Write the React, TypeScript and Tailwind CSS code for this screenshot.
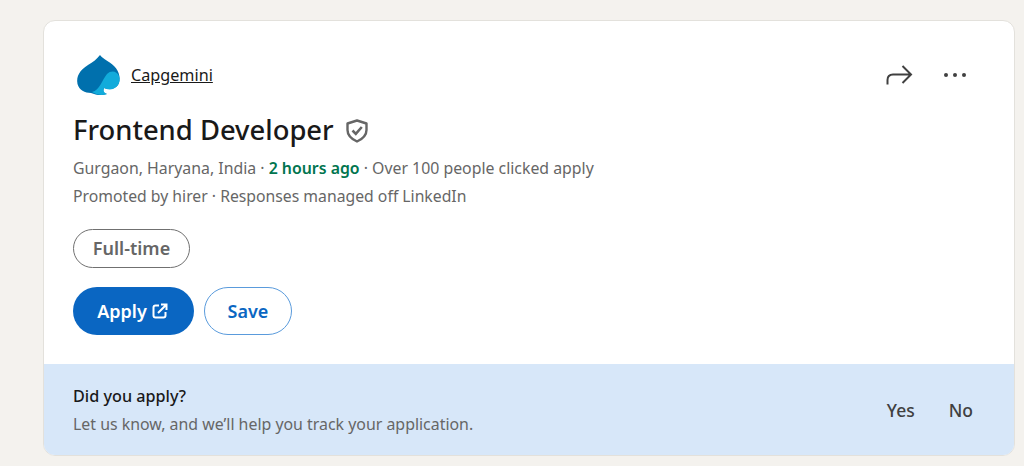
function Logo() {
    return (
        <svg width="46" height="42" viewBox="0 0 46 42">
            <path
                d="M24 1 C27 5 33 7 38 12 C44 18 45 26 42 31 C39 35 33 36 28 34 C27 37 26 39 31 40 C25 42 20 41 15 39 C9 39 3 36 1.5 30 C0 22 4 16 12 11 C17 8 21 5 24 1 Z"
                fill="#0070ad"
            />
            <path
                d="M16 38 C24 36 26 26 31 20 C35 16 41 17 43 22 C45 28 42 33 37 35 C33 36 30 35 28 34 C27 37 28 39 31 40 C26 42 21 41 16 38 Z"
                fill="#12abdb"
            />
        </svg>
    )
}

function ShieldCheck() {
    return (
        <svg width="24" height="25" viewBox="0 0 24 25" fill="none">
            <path
                d="M12 2.5 L21.5 5.5 V12 C21.5 17.5 17.5 21 12 23.5 C6.5 21 2.5 17.5 2.5 12 V5.5 Z"
                stroke="#666666"
                strokeWidth="2.4"
                strokeLinejoin="round"
            />
            <path
                d="M7.5 12.5 L10.8 15.8 L16.8 9"
                stroke="#666666"
                strokeWidth="2.6"
            />
        </svg>
    )
}

function ShareArrow() {
    return (
        <svg width="27" height="24" viewBox="0 0 27 24" fill="none">
            <path
                d="M1.5 21.5 V17 C1.5 13.5 3.5 11.5 7 11.5 H24.5 M16.5 3 L25 11.5 L16.5 20"
                stroke="#404040"
                strokeWidth="2"
            />
        </svg>
    )
}

function ExternalIcon() {
    return (
        <svg width="16" height="16" viewBox="0 0 16 16" fill="none">
            <path
                d="M7 2.5 H3.5 C2.2 2.5 1.5 3.2 1.5 4.5 V12.5 C1.5 13.8 2.2 14.5 3.5 14.5 H11.5 C12.8 14.5 13.5 13.8 13.5 12.5 V9"
                stroke="white"
                strokeWidth="2"
            />
            <path d="M6 10 L14 2 M9 1.5 H14.5 V7" stroke="white" strokeWidth="2" />
        </svg>
    )
}

export default function App() {
    return (
        <div
            className="h-[466px] overflow-hidden bg-[#f4f2ee] pl-[43px] pr-[9px] pt-5 text-[#191919]"
            style={{ fontFamily: '"Noto Sans", sans-serif' }}
        >
            <div className="h-[436px] overflow-hidden rounded-xl border border-[#e3e1dc] bg-white">
                <div className="h-[343px] pl-[29px] pr-[48px] pt-[33px]">
                    <div className="flex items-center justify-between">
                        <div className="flex items-center gap-[9px] pl-[3px]">
                            <Logo />
                            <span className="text-[16.2px] leading-5 underline">
                                Capgemini
                            </span>
                        </div>

                        <div className="flex items-center gap-[31px]">
                            <ShareArrow />
                            <div className="flex gap-[5px]">
                                <span className="h-1 w-1 rounded-full bg-[#404040]" />
                                <span className="h-1 w-1 rounded-full bg-[#404040]" />
                                <span className="h-1 w-1 rounded-full bg-[#404040]" />
                            </div>
                        </div>
                    </div>

                    <div className="mt-4 flex items-center gap-[11px]">
                        <h1 className="text-[27.4px] font-medium leading-9">
                            Frontend Developer
                        </h1>
                        <ShieldCheck />
                    </div>

                    <p className="mt-[6px] text-[15.85px] leading-7 text-[#666666]">
                        Gurgaon, Haryana, India ·{" "}
                        <span className="font-semibold text-[#01754f]">
                            2 hours ago
                        </span>{" "}
                        · Over 100 people clicked apply
                    </p>
                    <p className="text-[15.75px] leading-7 text-[#666666]">
                        Promoted by hirer · Responses managed off LinkedIn
                    </p>

                    <div className="mt-[19px] flex h-[39px] w-[117px] items-center justify-center rounded-full border border-[#707070] text-[18px] font-semibold text-[#666666]">
                        Full-time
                    </div>

                    <div className="mt-[19px] flex gap-[10px]">
                        <button className="flex h-12 w-[121px] items-center justify-center gap-[5px] rounded-full bg-[#0a66c2] pr-[2px] text-[18px] font-semibold text-white">
                            Apply
                            <ExternalIcon />
                        </button>
                        <button className="h-12 w-[88px] rounded-full border border-[#5a9bdc] text-[18px] font-semibold text-[#0a66c2]">
                            Save
                        </button>
                    </div>
                </div>

                <div className="flex h-[91px] items-center justify-between bg-[#d7e7f9] pl-[29px] pr-[41px]">
                    <div>
                        <p className="text-[16.2px] font-medium leading-7">
                            Did you apply?
                        </p>
                        <p className="text-[15.9px] leading-7 text-[#666666]">
                            Let us know, and we’ll help you track your application.
                        </p>
                    </div>

                    <div className="flex gap-[34px] pt-[2px] text-[17.5px] font-medium text-[#404040]">
                        <span>Yes</span>
                        <span>No</span>
                    </div>
                </div>
            </div>
        </div>
    )
}
